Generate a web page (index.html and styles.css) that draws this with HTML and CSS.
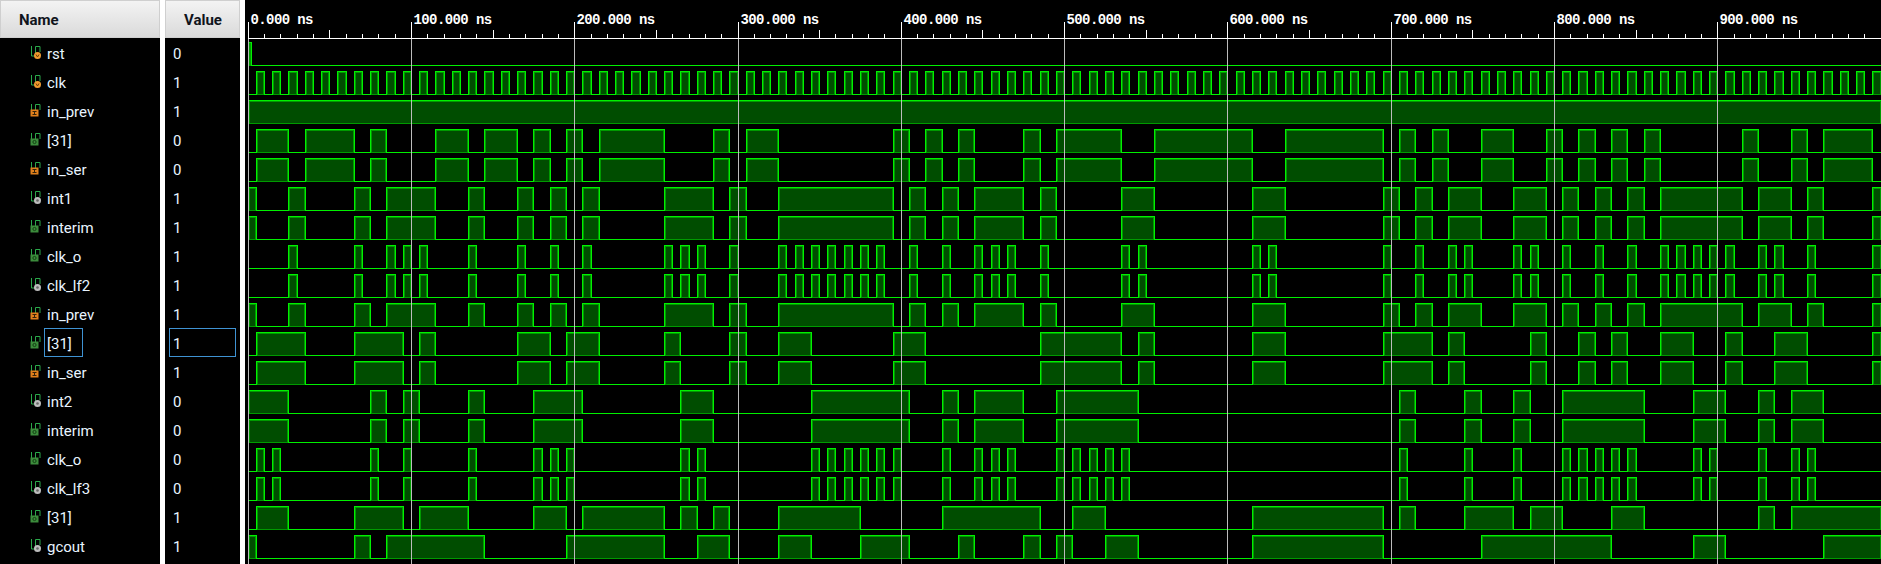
FILE: index.html
```html
<!DOCTYPE html>
<html lang="en">
<head>
    <meta charset="UTF-8">
    <title>Waveform viewer</title>
    <link rel="stylesheet" href="styles.css">
</head>
<body>
    <svg class="sprite" xmlns="http://www.w3.org/2000/svg">
        <symbol id="ico-input" viewBox="0 0 12 14">
            <path class="trace" d="M1.5 0V10H5.5V0.5H10V6"/>
            <rect x="0.5" y="5.5" width="8" height="7" fill="#e0801c"/>
            <path d="M2.5 7.5H6.5M4.5 7.5V10.5M2.5 10.5H6.5" stroke="#33210a" fill="none"/>
        </symbol>
        <symbol id="ico-output" viewBox="0 0 12 14">
            <path class="trace" d="M1.5 0V10H5.5V0.5H10V6"/>
            <rect x="0.5" y="5.5" width="8" height="7" fill="#3c8c3c"/>
            <circle cx="4.5" cy="9" r="1.6" stroke="#123f12" fill="none"/>
        </symbol>
        <symbol id="ico-reg" viewBox="0 0 12 14">
            <path class="trace" d="M1.5 0V10H5.5V0.5H10V6"/>
            <circle cx="7.5" cy="9.5" r="3.5" fill="#f09a30"/>
            <path d="M6 8.5L7.5 11L9 8.5" stroke="#6b3c05" fill="none"/>
        </symbol>
        <symbol id="ico-wire" viewBox="0 0 12 14">
            <path class="trace" d="M1.5 0V10H5.5V0.5H10V6"/>
            <circle cx="7.5" cy="9.5" r="3.5" fill="#bdbdbd"/>
            <circle cx="7.5" cy="9.5" r="1.3" fill="#666"/>
        </symbol>
    </svg>

    <div class="panel name-panel">
        <div class="col-head">Name</div>
        <div class="rows">
            <div class="row"><svg class="ico"><use href="#ico-reg"/></svg><span class="sig">rst</span></div>
            <div class="row"><svg class="ico"><use href="#ico-reg"/></svg><span class="sig">clk</span></div>
            <div class="row"><svg class="ico"><use href="#ico-input"/></svg><span class="sig">in_prev</span></div>
            <div class="row"><svg class="ico"><use href="#ico-output"/></svg><span class="sig">[31]</span></div>
            <div class="row"><svg class="ico"><use href="#ico-input"/></svg><span class="sig">in_ser</span></div>
            <div class="row"><svg class="ico"><use href="#ico-wire"/></svg><span class="sig">int1</span></div>
            <div class="row"><svg class="ico"><use href="#ico-output"/></svg><span class="sig">interim</span></div>
            <div class="row"><svg class="ico"><use href="#ico-output"/></svg><span class="sig">clk_o</span></div>
            <div class="row"><svg class="ico"><use href="#ico-wire"/></svg><span class="sig">clk_lf2</span></div>
            <div class="row"><svg class="ico"><use href="#ico-input"/></svg><span class="sig">in_prev</span></div>
            <div class="row"><svg class="ico"><use href="#ico-output"/></svg><span class="sig selected">[31]</span></div>
            <div class="row"><svg class="ico"><use href="#ico-input"/></svg><span class="sig">in_ser</span></div>
            <div class="row"><svg class="ico"><use href="#ico-wire"/></svg><span class="sig">int2</span></div>
            <div class="row"><svg class="ico"><use href="#ico-output"/></svg><span class="sig">interim</span></div>
            <div class="row"><svg class="ico"><use href="#ico-output"/></svg><span class="sig">clk_o</span></div>
            <div class="row"><svg class="ico"><use href="#ico-wire"/></svg><span class="sig">clk_lf3</span></div>
            <div class="row"><svg class="ico"><use href="#ico-output"/></svg><span class="sig">[31]</span></div>
            <div class="row"><svg class="ico"><use href="#ico-wire"/></svg><span class="sig">gcout</span></div>
        </div>
    </div>

    <div class="panel value-panel">
        <div class="col-head">Value</div>
        <div class="rows">
            <div class="row"><span class="val">0</span></div>
            <div class="row"><span class="val">1</span></div>
            <div class="row"><span class="val">1</span></div>
            <div class="row"><span class="val">0</span></div>
            <div class="row"><span class="val">0</span></div>
            <div class="row"><span class="val">1</span></div>
            <div class="row"><span class="val">1</span></div>
            <div class="row"><span class="val">1</span></div>
            <div class="row"><span class="val">1</span></div>
            <div class="row"><span class="val">1</span></div>
            <div class="row"><span class="val selected">1</span></div>
            <div class="row"><span class="val">1</span></div>
            <div class="row"><span class="val">0</span></div>
            <div class="row"><span class="val">0</span></div>
            <div class="row"><span class="val">0</span></div>
            <div class="row"><span class="val">0</span></div>
            <div class="row"><span class="val">1</span></div>
            <div class="row"><span class="val">1</span></div>
        </div>
    </div>

    <div class="wave-panel">
        <svg id="waves" class="waves" xmlns="http://www.w3.org/2000/svg"></svg>
    </div>

    <script src="waves.js"></script>
</body>
</html>
```

FILE: styles.css
```css
html, body {
    margin: 0;
    height: 564px;
    overflow: hidden;
}

body {
    display: flex;
    gap: 5px;
    background: #fff;
    font-family: Roboto, "Noto Sans", sans-serif;
}

.sprite {
    display: none;
}

.panel {
    display: flex;
    flex-direction: column;
    background: #000;
}

.name-panel {
    width: 160px;
}

.value-panel {
    width: 75px;
}

.col-head {
    box-sizing: border-box;
    height: 38px;
    line-height: 38px;
    border: 1px solid #cfcfcf;
    background: linear-gradient(#f3f3f3, #dadada);
    color: #10141c;
    font-size: 15px;
    font-weight: 700;
}

.name-panel .col-head {
    padding-left: 18px;
}

.value-panel .col-head {
    padding-left: 18px;
}

.rows {
    display: flex;
    flex-direction: column;
}

.row {
    display: flex;
    align-items: center;
    height: 29px;
    color: #e8f4ff;
    font-size: 15px;
}

.name-panel .row {
    padding-left: 30px;
}

.ico {
    width: 12px;
    height: 14px;
    margin-right: 2px;
}

.trace {
    fill: none;
    stroke: #2aa84a;
    stroke-width: 1;
}

.sig {
    box-sizing: border-box;
    height: 29px;
    line-height: 29px;
    padding: 1px 2px 0;
    border: 1px solid transparent;
}

.sig.selected {
    min-width: 39px;
}

.val {
    box-sizing: border-box;
    width: 67px;
    height: 29px;
    line-height: 29px;
    margin-left: 4px;
    padding: 1px 0 0 3px;
    border: 1px solid transparent;
}

.val.selected,
.sig.selected {
    border-color: #3f93d3;
}

.wave-panel {
    flex: 1;
    background: #000;
}

.waves {
    display: block;
    width: 100%;
    height: 564px;
}

.time-label {
    fill: #fff;
    font-family: "Liberation Mono", monospace;
    font-size: 14px;
    font-weight: 700;
    letter-spacing: -0.6px;
}
```

FILE: waves.js
```js
// Waveform drawing. All times are in ns, intervals are the spans where a signal is high.
const ROW_TOP = 42, ROW_STEP = 29, ROW_H = 23;
const X0 = 2.6, NS = 1.633, END = 1000;

const x = (t) => Math.round(X0 + t * NS);

const in31 = [[5,25],[35,65],[75,85],[115,135],[145,165],[175,185],[195,205],[215,255],[285,295],[305,325],
    [395,405],[415,425],[435,445],[475,485],[495,535],[555,615],[635,695],[705,715],[725,735],[755,775],
    [795,805],[815,825],[835,845],[855,865],[915,925],[945,955],[965,995]];

const stage1 = [[5,35],[65,95],[105,115],[165,185],[195,215],[255,265],[295,305],[325,345],[395,415],
    [485,535],[545,555],[615,635],[695,725],[735,745],[785,795],[815,825],[835,845],[865,885],[905,915],
    [935,955],[995,1000]];

const int2 = [[0,25],[75,85],[95,105],[135,145],[175,205],[265,285],[345,405],[425,435],[445,475],[495,545],
    [705,715],[745,755],[775,785],[805,855],[885,905],[925,935],[945,965]];

const stage2 = [[5,25],[65,95],[105,135],[175,195],[205,255],[265,275],[285,295],[325,375],[425,485],[505,525],
    [615,695],[705,715],[745,775],[785,805],[835,855],[925,935],[945,1000]];

const gcout = [[0,5],[65,75],[85,145],[195,255],[275,295],[325,345],[375,405],[435,445],[475,485],[495,505],
    [525,545],[615,695],[755,835],[885,905],[965,1000]];

// the spans where the signal is low
function invert(spans) {
    const out = [];
    let from = 0;
    spans.forEach(([a, b]) => {
        if (a > from) out.push([from, a]);
        from = b;
    });
    if (from < END) out.push([from, END]);
    return out;
}

// clock pulses let through while the enable is high
function gated(spans) {
    const out = [];
    for (let t = 5; t < END; t += 10) {
        if (spans.some(([a, b]) => a <= t && t < b)) out.push([t, t + 5]);
    }
    return out;
}

const clock = [];
for (let t = 5; t < END; t += 10) clock.push([t, t + 5]);

const int1 = invert(in31);

const signals = [
    [[0, 2]], clock, [[0, END]], in31, in31, int1, int1, gated(int1), gated(int1),
    int1, stage1, stage1, int2, int2, gated(int2), gated(int2), stage2, gcout
];

function drawRow(spans, row) {
    const top = ROW_TOP + row * ROW_STEP, bot = top + ROW_H;
    let fill = "", dim = "", bright = `M${x(0)} ${bot + 0.5}`;
    spans.forEach(([a, b]) => {
        const l = x(a), r = x(b);
        fill += `<rect x="${l}" y="${top}" width="${r - l}" height="${ROW_H + 1}"/>`;
        dim += `<path d="M${l + 1.5} ${bot + 0.5}V${top + 1.5}H${r - 0.5}V${bot + 0.5}M${l} ${bot + 0.5}H${r}"/>`;
        bright += `H${l + 0.5}V${top + 0.5}H${r + 0.5}V${bot + 0.5}`;
    });
    // the last falling edge does not come back down inside the panel
    const last = spans[spans.length - 1];
    if (last[1] < END) bright += `H${x(END) + 1}`;
    return `<g class="fill" fill="#004d00">${fill}</g>` +
        `<g fill="none" stroke="#009a00">${dim}</g>` +
        `<path d="${bright}" fill="none" stroke="#00f000"/>`;
}

function drawRuler() {
    let out = `<path d="M${x(0)} 38.5H1640" stroke="#fff"/>`;
    for (let t = 0; t < END; t += 10) {
        if (t % 100 == 0) continue;
        const h = t % 50 == 0 ? 8 : 4;
        out += `<path d="M${x(t) + 0.5} 38V${38 - h}" stroke="#fff"/>`;
    }
    for (let t = 0; t < END; t += 100) {
        const lx = x(t) + 0.5;
        out += `<path d="M${lx} 22V38" stroke="#fff"/>`;
        out += `<text class="time-label" x="${lx + 2}" y="24">${t}.000 ns</text>`;
    }
    return out;
}

function drawGrid() {
    let out = "";
    for (let t = 0; t < END; t += 100) {
        out += `<path d="M${x(t) + 0.5} 39V564" stroke="#bcbcbc"/>`;
    }
    return out;
}

const svg = document.getElementById("waves");
svg.setAttribute("shape-rendering", "crispEdges");
svg.innerHTML = drawRuler() + signals.map(drawRow).join("") + drawGrid();
```
